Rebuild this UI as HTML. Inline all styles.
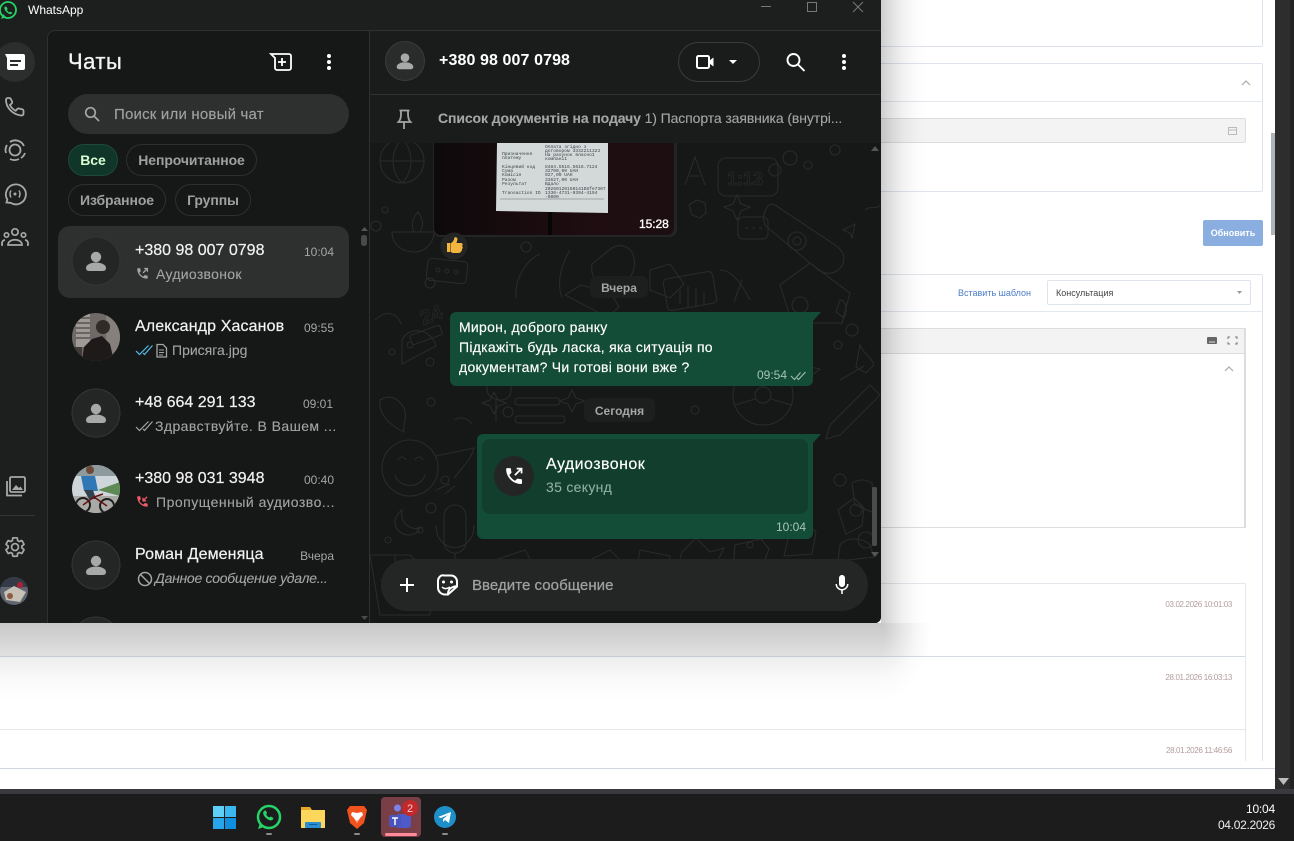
<!DOCTYPE html>
<html><head><meta charset="utf-8"><style>
html,body{margin:0;padding:0;width:1294px;height:841px;overflow:hidden;background:#fff;font-family:"Liberation Sans","DejaVu Sans",sans-serif}
.a{position:absolute;box-sizing:border-box}
.t{position:absolute;white-space:nowrap;line-height:20px;height:20px}
.r{text-align:right}
.g{color:#a5a5a5}
.w{color:#fff}
.n{font-size:16px;color:#f2f2f2;-webkit-text-stroke:.2px #f2f2f2}
.p{font-size:14px;color:#a5a5a5;-webkit-text-stroke:.1px #a5a5a5}
.tm{font-size:12px;color:#a5a5a5}
.m{font-size:14px;color:#fff;letter-spacing:.27px;-webkit-text-stroke:.15px #fff}
.chip{position:absolute;box-sizing:border-box;border:1px solid #2e3030;border-radius:17px;height:32px;line-height:30px;text-align:center;font-size:14px;font-weight:bold;color:#a0a0a0;letter-spacing:-.1px}
.card{position:absolute;box-sizing:border-box;background:#fff;border:1px solid #dfe4ec;border-radius:2px}
.s{position:absolute;left:0;top:0}
.d{font-size:8px;color:#b39c9c;letter-spacing:-.36px}
</style></head><body>
<div class="card" style="left:-5px;top:-5px;width:1268px;height:52px"></div>
<div class="card" style="left:-5px;top:63px;width:1268px;height:129px"></div>
<div class="a" style="left:0;top:101px;width:1262px;height:1px;background:#e3e7ee"></div>
<div class="a" style="left:0;top:118px;width:1246px;height:25px;background:#f3f3f3;border:1px solid #ddd;border-radius:2px"></div>
<div class="a" style="left:1203px;top:220px;width:60px;height:26px;background:#8aaee0;border-radius:2px;color:#fff;font-size:9px;font-weight:bold;text-align:center;line-height:26px">Обновить</div>
<div class="card" style="left:-5px;top:274px;width:1268px;height:500px;border-bottom:0"></div>
<div class="a" style="left:0;top:311px;width:1262px;height:1px;background:#e3e7ee"></div>
<div class="t" style="left:958px;top:283px;font-size:9px;color:#4a7cc7">Вставить шаблон</div>
<div class="a" style="left:1047px;top:280px;width:204px;height:25px;border:1px solid #dfe4ec;border-radius:2px;background:#fff"></div>
<div class="t" style="left:1056px;top:283px;font-size:9px;color:#444">Консультация</div>
<div class="a" style="left:-5px;top:328px;width:1251px;height:200px;border:1px solid #ddd;border-right:2px solid #ddd;background:#fff"></div>
<div class="a" style="left:0;top:329px;width:1244px;height:25px;background:#f3f3f3;border-bottom:1px solid #ddd"></div>
<div class="a" style="left:-5px;top:583px;width:1251px;height:200px;border:1px solid #e4e7ec;background:#fff"></div>
<div class="a" style="left:0;top:623px;width:1000px;height:33px;background:linear-gradient(90deg,#f1f1f1 880px,#fff 930px)"></div>
<div class="a" style="left:0;top:656px;width:1245px;height:1px;background:#d5dbe3"></div>
<div class="a" style="left:0;top:729px;width:1245px;height:1px;background:#e6e6e6"></div>
<div class="t r d" style="left:1132px;width:100px;top:595px">03.02.2026 10:01:03</div>
<div class="t r d" style="left:1132px;width:100px;top:668px">28.01.2026 16:03:13</div>
<div class="t r d" style="left:1132px;width:100px;top:741px">28.01.2026 11:46:56</div>
<div class="a" style="left:0;top:761px;width:1275px;height:28px;background:#fff"></div>
<div class="a" style="left:0;top:768px;width:1275px;height:1px;background:#cfd5dc"></div>
<div class="a" style="left:1271px;top:133px;width:4px;height:102px;background:#aeb5bb"></div>
<div class="a" style="left:1275px;top:0;width:15px;height:789px;background:#2d2d2d"></div>
<div class="a" style="left:1290px;top:0;width:4px;height:789px;background:#232323"></div>
<div class="a" style="left:0;top:789px;width:1294px;height:5px;background:#3a3a3e"></div>
<div class="a" style="left:0;top:794px;width:1294px;height:47px;background:#1c1c1c"></div>
<div class="a" style="left:381px;top:797px;width:40px;height:40px;background:#7a3e46;border-radius:4px"></div>
<div class="a" style="left:385px;top:833px;width:32px;height:3px;background:#ff8a9a;border-radius:2px"></div>
<div class="t r w" style="left:1175px;width:100px;top:799px;font-size:12px;letter-spacing:-.2px">10:04</div>
<div class="t r w" style="left:1175px;width:100px;top:815px;font-size:12px;letter-spacing:-.3px;color:#eee">04.02.2026</div>

<!-- explicit window shadow -->
<div class="a" style="left:881px;top:0;width:45px;height:623px;background:linear-gradient(90deg,rgba(0,0,0,.2),rgba(0,0,0,.12) 10px,rgba(0,0,0,.05) 22px,rgba(0,0,0,.01) 36px,rgba(0,0,0,0))"></div>
<div class="a" style="left:0;top:623px;width:881px;height:78px;background:linear-gradient(180deg,rgba(0,0,0,.17),rgba(0,0,0,.07) 33px,rgba(0,0,0,.02) 58px,rgba(0,0,0,0))"></div>
<div class="a" style="left:881px;top:623px;width:50px;height:78px;background:radial-gradient(50px 78px at 0 0,rgba(0,0,0,.18),rgba(0,0,0,.07) 42%,rgba(0,0,0,.02) 72%,rgba(0,0,0,0))"></div>

<!-- window -->
<div class="a" style="left:-40px;top:-40px;width:921px;height:663px;background:#1d1f1f;border-radius:0 0 6px 0">
 <div class="a" style="left:87px;top:70px;width:323px;height:593px;background:#161717;border-left:1px solid #2f3131;border-top:1px solid #2f3131;border-radius:8px 0 0 0"></div>
 <div class="a" style="left:409px;top:70px;width:1px;height:593px;background:#2f3131"></div>
 <div class="a" style="left:410px;top:70px;width:511px;height:65px;background:#1a1c1c;border-top:1px solid #303232;border-bottom:1px solid #303232"></div>
 <div class="a" style="left:410px;top:135px;width:511px;height:48px;background:#1a1c1c"></div>
 <div class="a" style="left:410px;top:183px;width:511px;height:480px;background:#161717;border-radius:0 0 6px 0"></div>
</div>

<!-- doodles -->
<svg class="s" width="881" height="623" viewBox="0 0 881 623" style="position:absolute;left:0;top:0">
<defs><clipPath id="cc"><path d="M370 143H881V617a6 6 0 0 1-6 6H370z"/></clipPath>
<clipPath id="im"><path d="M434 143H674V228a7 7 0 0 1-7 7H441a7 7 0 0 1-7-7z"/></clipPath>
<clipPath id="av1"><circle cx="96" cy="337" r="24"/></clipPath>
<clipPath id="av2"><circle cx="96" cy="489" r="24"/></clipPath>
<clipPath id="av3"><circle cx="14" cy="591" r="14"/></clipPath>
<clipPath id="lc"><rect x="47" y="30" width="322" height="593"/></clipPath>
<linearGradient id="ig" x1="0" x2="1" y1="0" y2="0"><stop offset="0" stop-color="#0d0a0b"/><stop offset=".3" stop-color="#170b0e"/><stop offset=".7" stop-color="#1f0d11"/><stop offset="1" stop-color="#1c0e11"/></linearGradient>
</defs>
<g clip-path="url(#cc)" fill="none" stroke="#292b2b" stroke-width="1.1">
<circle cx="402" cy="161" r="22"/><path d="M380 161h44M402 139c-12 12-12 32 0 44M402 139c12 12 12 32 0 44"/>
<path d="M392 232c0 12 10 20 22 20s20-10 20-20zM414 232c-4-8 0-16 4-20 5 6 6 14 2 20"/>
<circle cx="376" cy="226" r="5"/><circle cx="385" cy="210" r="3"/><circle cx="526" cy="247" r="5"/><circle cx="430" cy="283" r="5"/>
<rect x="427" y="260" width="40" height="22" rx="4" transform="rotate(6 447 271)"/><circle cx="438" cy="270" r="2"/><circle cx="447" cy="271" r="2"/><circle cx="456" cy="272" r="2"/>
<rect x="718" y="158" width="60" height="38" rx="8"/><text x="727" y="185" font-size="18" font-weight="bold" fill="none" stroke="#292b2b" stroke-width=".7">1:13</text>
<path d="M685 185l10-28 10 28M690 176h10"/>
<circle cx="775" cy="170" r="6"/><circle cx="790" cy="158" r="7"/><circle cx="808" cy="165" r="4"/><circle cx="835" cy="150" r="5"/>
<path d="M775 205l60 40c8 5 12 14 6 22s-16 8-24 2l-50-42c-8-7 0-28 8-22z"/><circle cx="797" cy="241" r="9"/><circle cx="797" cy="241" r="4"/>
<rect x="738" y="217" width="30" height="22" rx="5"/><path d="M745 228h3M752 228h3M759 228h3"/>
<path d="M737 195l4 9 9 3-9 4-4 9-4-9-9-4 9-3z M697 200l-8 5 3 10 8 3 6-5-1-10z"/>
<path d="M843 230l12-6-3 14-2-5zM865 210c6-5 12 0 15-5"/>
<path d="M612 248c10-6 20 0 22 10 3 14-8 30-22 30s-22-12-20-24z"/><path d="M650 270l20-6 14 20-14 14-20-8z"/>
<path d="M540 254c-14 6-26 26-24 44M570 250c-8 14-14 30-8 48"/><path d="M720 270c10 0 20 10 30 30M742 280l-8 22"/>
<path d="M780 285l30-22 40 30-8 30h-50z"/><circle cx="800" cy="305" r="8"/><path d="M565 295l16-10 30 8 8 14-12 10z"/><rect x="665" y="275" width="50" height="32" rx="4" transform="rotate(-10 690 291)"/>
<path d="M680 290v14M688 286v22M696 288v18M704 292v12"/>
<text x="420" y="322" font-size="20" font-weight="bold" fill="none" stroke="#292b2b" stroke-width=".7" transform="rotate(-20 430 315)">24</text>
<rect x="410" y="330" width="32" height="10" rx="2" transform="rotate(-20 426 335)"/>
<path d="M402 340c8-16 30-10 34 6l-34 18zM375 320c10-10 22-8 26 4"/>
<circle cx="392" cy="352" r="3"/><circle cx="430" cy="362" r="4"/><circle cx="410" cy="345" r="3"/>
<path d="M485 330c10-6 24-4 26 10v50c0 6-4 10-10 10s-14-4-14-10zM496 400v22"/>
<path d="M380 400c10-6 18-2 24 8 4 10-2 16 0 24-12-6-26-16-24-32z"/>
<path d="M494 392l4 8 8 3-8 3-4 8-4-8-8-3 8-3zM572 390l4 8 9 3-9 3-4 8-4-8-9-3 9-3z"/>
<rect x="515" y="398" width="45" height="7" rx="3"/><rect x="515" y="416" width="50" height="7" rx="3"/>
<circle cx="431" cy="402" r="4"/><circle cx="508" cy="412" r="5"/><circle cx="695" cy="410" r="4"/>
<circle cx="763" cy="395" r="30"/><circle cx="763" cy="395" r="8"/><path d="M763 365v22M735 405l20-6M791 405l-20-6"/>
<path d="M830 425l40-40 10 10-40 40-14 4z"/><path d="M806 357l4 10 10 2-8 6"/>
<path d="M700 365c10 10 30 14 40 20"/><circle cx="852" cy="330" r="6"/><circle cx="838" cy="345" r="4"/><path d="M860 345c4 10 10 10 14 20l-8 8-10-6z"/>
<circle cx="410" cy="468" r="28"/><path d="M398 460c2-4 6-4 8 0M415 460c2-4 6-4 8 0M395 475c4 14 26 14 30 0"/><path d="M436 456l38-8c-2 10-12 20-20 30"/><path d="M436 490l14-6M445 494l10-8"/>
<circle cx="388" cy="540" r="3"/><circle cx="431" cy="508" r="5"/><circle cx="420" cy="530" r="3"/><circle cx="445" cy="480" r="4"/>
<path d="M402 510c-8 6-10 16-2 22s18 2 20-4c-10 2-20-4-18-18z"/><rect x="444" y="505" width="22" height="48" rx="11"/><path d="M436 525c0 30 38 30 38 0M455 553v12"/>
<path d="M370 555h40l20 20v40h-50zM395 555v50M380 580h30"/>
<path d="M495 560l30-10 10 18-24 14zM540 590c10-12 30-14 44-6M555 598c6-6 16-8 24-4"/>
<path d="M590 560l20-10 18 18-16 20-22-8zM640 550l30 6-6 28-30-4zM682 552l14-14 14 14 14-4-8 16 8 14-14-4-14 14-4-14-14-8z"/>
<path d="M735 545l26-6 8 10-10 26-26-6zM790 530c8-8 20-6 26 2l-4 22-28 2z"/><path d="M838 510l16-12 10 10-2 18-16 8z"/>
<circle cx="840" cy="480" r="6"/><circle cx="856" cy="510" r="6"/><circle cx="750" cy="545" r="3"/>
<path d="M855 505l-3-22c6-4 14-4 20 0l2 30z"/><circle cx="866" cy="540" r="8"/><path d="M840 545c6-8 22-8 30 0l4 12-36 4z"/>
<path d="M840 300c6 0 8 10 4 18l-8-6zM840 380l24-14M486 460l-8 4M454 420c6-4 14-2 18 4M490 440c8-4 16 0 18 6"/>
</g>
<!-- image bubble -->
<path d="M433 143H677V230a7 7 0 0 1-7 7H440a7 7 0 0 1-7-7z" fill="#232525"/>
<g clip-path="url(#im)">
<rect x="434" y="143" width="240" height="92" fill="url(#ig)"/>
<path d="M550 212v23" stroke="#060606" stroke-width="4"/>
<path d="M497 143H608V213L496 211z" fill="#d3d8d8"/>
<g font-family="Liberation Mono,monospace" font-size="4.6" fill="#3f4348">
<text x="502" y="155">Призначення</text><text x="502" y="159">платежу</text><text x="545" y="148">Оплата згідно з</text><text x="545" y="152">договором 3332211323</text><text x="545" y="156">На рахунок власної</text><text x="545" y="160">компанії</text>
<text x="502" y="168">Кінцевий код</text><text x="545" y="168">8484.5516.5616.7124</text><text x="502" y="172">Сума</text><text x="545" y="172">32700,00 UAH</text><text x="502" y="176">Комісія</text><text x="545" y="176">927,00 UAH</text><text x="502" y="181">Разом</text><text x="545" y="181">33627,00 UAH</text><text x="502" y="185">Результат</text><text x="545" y="185">Вдало</text><text x="545" y="190">20260120150141D8fe7307</text><text x="502" y="194">Transaction ID</text><text x="545" y="194">1330-4731-9394-4194</text><text x="545" y="198">-0800</text>
</g>
<path d="M500 199H604" stroke="#8a9094" stroke-width=".7"/>
</g>
<circle cx="454" cy="246" r="13.500" fill="#232525"/>
<path d="M447 243h3.500v9H447zM451 243c2-1 3-3 3.500-5.500 1-1 3 0 3 2l-1 3.500h4.500c2 0 2 2 1 3 1 1 1 2 0 3 0 1 0 2-1 2.500-.7 1.500-2 1.500-3 1.500h-5.500l-1.500-1z" fill="#f4b53f"/>
<!-- bubbles -->
<path d="M456 312H821L813 321V380a6 6 0 0 1-6 6H456a6 6 0 0 1-6-6V318a6 6 0 0 1 6-6z" fill="#144d37"/>
<path d="M483 434H821L813 443V533a6 6 0 0 1-6 6H483a6 6 0 0 1-6-6V440a6 6 0 0 1 6-6z" fill="#144d37"/>
<rect x="482" y="439" width="326" height="75" rx="8" fill="#123e2d"/>
<rect x="590" y="276" width="58" height="22" rx="6" fill="#1d1f1f"/>
<rect x="584" y="398" width="71" height="24" rx="6" fill="#1d1f1f"/>
<circle cx="514" cy="476" r="20" fill="#242626"/>
<rect x="381" y="559" width="487" height="52" rx="26" fill="#242626"/>
<!-- chat scrollbar -->
<rect x="872" y="487" width="5" height="59" rx="2" fill="#4a4c4c"/>
<path d="M871 151l4-5 4 5zM871 552l4 5 4-5z" fill="#555"/>
<!-- list row active -->
<rect x="58" y="226" width="291" height="72" rx="12" fill="#2e2f2f"/>
<rect x="68" y="94" width="281" height="40" rx="20" fill="#2e2f2f"/>
<circle cx="15" cy="62" r="20" fill="#2c2e2e"/>
<!-- avatars -->
<g stroke="#343636" fill="#242626"><circle cx="96" cy="261" r="24"/><circle cx="96" cy="413" r="24"/><circle cx="96" cy="565" r="24"/><circle cx="96" cy="641" r="24" clip-path="url(#lc)"/></g>
<g fill="#a8a8a8"><g transform="translate(96 261)"><circle cy="-4" r="5.200"/><path d="M-6.500 10h13q3.500 0 3.500-3c0-3.500-5-5.500-10-5.500s-10 2-10 5.500q0 3 3.500 3z"/></g>
<g transform="translate(96 413)"><circle cy="-4" r="5.200"/><path d="M-6.500 10h13q3.500 0 3.500-3c0-3.500-5-5.500-10-5.500s-10 2-10 5.500q0 3 3.500 3z"/></g>
<g transform="translate(96 565)"><circle cy="-4" r="5.200"/><path d="M-6.500 10h13q3.500 0 3.500-3c0-3.500-5-5.500-10-5.500s-10 2-10 5.500q0 3 3.500 3z"/></g></g>
<circle cx="405" cy="61" r="19.500" fill="#2a2c2c" stroke="#3a3c3c"/>
<g fill="#a8a8a8" transform="translate(405 61) scale(.83)"><circle cy="-4" r="5.200"/><path d="M-6.500 10h13q3.500 0 3.500-3c0-3.500-5-5.500-10-5.500s-10 2-10 5.500q0 3 3.500 3z"/></g>
<g clip-path="url(#av1)"><rect x="72" y="313" width="48" height="48" fill="#6f6967"/><rect x="76" y="313" width="14" height="34" fill="#a09a96"/><path d="M76 318h14M76 323h14M76 328h14M76 333h14M76 338h14" stroke="#4a4543" stroke-width="1.300"/><rect x="106" y="313" width="14" height="48" fill="#86807c"/><path d="M82 361l2-14 8-8 10-3 8 8 4 17z" fill="#1d1a19"/><circle cx="103" cy="327" r="7" fill="#302b29"/><path d="M72 347h10v14H72z" fill="#3f3a38"/></g>
<g clip-path="url(#av2)"><rect x="72" y="465" width="48" height="48" fill="#cfd6da"/><rect x="72" y="465" width="48" height="11" fill="#8f9a9f"/><path d="M98 490l22-8v14z" fill="#5e8a54"/><path d="M72 496h48v17H72z" fill="#a9a9a6"/><circle cx="90" cy="470" r="4" fill="#6b4b38"/><path d="M81 476h14l3 15H84z" fill="#2f78b5"/><path d="M84 490h9l3 9h-7z" fill="#31414e"/><circle cx="83" cy="505" r="7" fill="none" stroke="#1c1c1c" stroke-width="2"/><circle cx="107" cy="506" r="7" fill="none" stroke="#1c1c1c" stroke-width="2"/><path d="M83 505l11-8 13 9M94 497l9-3" stroke="#611" stroke-width="1.500" fill="none"/></g>
<g clip-path="url(#av3)"><rect y="577" width="28" height="28" fill="#5f6672"/><rect y="577" width="28" height="10" fill="#343a46"/><path d="M4 592l10-6 12 6-6 10-14-2z" fill="#c7c0b4"/><circle cx="10" cy="596" r="3" fill="#8d5a44"/><circle cx="20" cy="585" r="3" fill="#a23"/></g>
<!-- list scroll -->
<path d="M361 231l3.500-4 3.500 4z" fill="#555"/><rect x="361" y="235" width="6" height="11" rx="2.500" fill="#484a4a"/><path d="M361 616l3.500 4 3.500-4z" fill="#4a4a4a"/>
<!-- video pill -->
<rect x="678.500" y="42.500" width="81" height="39" rx="19.500" fill="none" stroke="#3a3c3c"/>
</svg>

<!-- window text -->
<div class="t w" style="left:28px;top:0;font-size:12px">WhatsApp</div>
<div class="t" style="left:68px;top:52px;font-size:22px;color:#f5f5f5;letter-spacing:.5px;-webkit-text-stroke:.3px #f5f5f5">Чаты</div>
<div class="t g" style="left:114px;top:105px;font-size:15px;color:#a0a0a0;letter-spacing:.2px;-webkit-text-stroke:.15px #a0a0a0">Поиск или новый чат</div>
<div class="chip" style="left:68px;top:144px;width:50px;background:#103529;border-color:#1d4a3a;color:#d9fdd3">Все</div>
<div class="chip" style="left:126px;top:144px;width:131px">Непрочитанное</div>
<div class="chip" style="left:68px;top:184px;width:98px">Избранное</div>
<div class="chip" style="left:175px;top:184px;width:76px">Группы</div>

<div class="t n" style="left:135px;top:241px">+380 98 007 0798</div><div class="t tm r" style="left:284px;width:50px;top:242px">10:04</div><div class="t p" style="left:156px;top:264px;letter-spacing:.3px">Аудиозвонок</div>
<div class="t n" style="left:135px;top:317px;letter-spacing:.12px">Александр Хасанов</div><div class="t tm r" style="left:284px;width:50px;top:318px">09:55</div><div class="t p" style="left:172px;top:340px">Присяга.jpg</div>
<div class="t n" style="left:135px;top:393px">+48 664 291 133</div><div class="t tm r" style="left:283px;width:50px;top:394px">09:01</div><div class="t p" style="left:155px;top:416px;letter-spacing:.42px">Здравствуйте. В Вашем ...</div>
<div class="t n" style="left:135px;top:469px">+380 98 031 3948</div><div class="t tm r" style="left:284px;width:50px;top:470px">00:40</div><div class="t p" style="left:156px;top:492px;letter-spacing:.5px">Пропущенный аудиозво...</div>
<div class="t n" style="left:135px;top:545px;letter-spacing:.1px">Роман Деменяца</div><div class="t tm r" style="left:284px;width:50px;top:546px">Вчера</div><div class="t p" style="left:155px;top:568px;font-style:italic;letter-spacing:-.28px">Данное сообщение удале...</div>

<div class="t w" style="left:439px;top:51px;font-size:16px;font-weight:bold;letter-spacing:.1px">+380 98 007 0798</div>
<div class="t p" style="left:438px;top:108px;color:#a5a5a5;letter-spacing:-.1px"><b>Список документів на подачу</b> 1) Паспорта заявника (внутрі...</div>
<div class="t w" style="left:639px;top:214px;font-size:12px;-webkit-text-stroke:.35px #fff;letter-spacing:-.05px">15:28</div>
<div class="t" style="left:590px;width:58px;text-align:center;top:278px;font-size:12px;font-weight:bold;color:#a5a5a5">Вчера</div>
<div class="t" style="left:584px;width:71px;text-align:center;top:401px;font-size:12px;font-weight:bold;color:#a5a5a5">Сегодня</div>
<div class="t m" style="left:459px;top:317px">Мирон, доброго ранку</div>
<div class="t m" style="left:459px;top:337px">Підкажіть будь ласка, яка ситуація по</div>
<div class="t m" style="left:459px;top:357px">документам? Чи готові вони вже ?</div>
<div class="t" style="left:757px;top:365px;font-size:12px;color:#a5c4b7">09:54</div>
<div class="t w" style="left:546px;top:455px;font-size:16px;letter-spacing:.45px;-webkit-text-stroke:.15px #fff">Аудиозвонок</div>
<div class="t" style="left:546px;top:477px;font-size:14px;color:#8fb0a3;letter-spacing:.3px;-webkit-text-stroke:.1px #8fb0a3">35 секунд</div>
<div class="t r" style="left:756px;width:50px;top:517px;font-size:12px;color:#a5c4b7">10:04</div>
<div class="t" style="left:472px;top:576px;font-size:15px;color:#a0a0a0;letter-spacing:.05px;-webkit-text-stroke:.25px #a0a0a0">Введите сообщение</div>

<!-- icons -->
<svg class="s" width="1294" height="841" viewBox="0 0 1294 841" style="position:absolute;left:0;top:0">
<!-- title -->
<circle cx="8" cy="10" r="8" fill="none" stroke="#25d366" stroke-width="1.800"/><path d="M1 19l2-5 3 3z" fill="#25d366"/>
<path d="M5 6.500c-1 1-.8 3 1 5s4 3.200 5.500 2.500l.8-1.200-2-1.200-1 .8c-1-.4-2-1.400-2.400-2.400l.8-1-1.200-2.200z" fill="#25d366"/>
<path d="M761 6.500h10" stroke="#777" stroke-width="1"/><rect x="807.500" y="2.500" width="9" height="9" fill="none" stroke="#777"/><path d="M853 2l10 10M863 2l-10 10" stroke="#777"/>
<!-- rail -->
<path d="M5 54h18a2 2 0 0 1 2 2v12a2 2 0 0 1-2 2H9a2 2 0 0 1-2-2V58z" fill="#fff"/><path d="M10 60h11v2H10zM10 64h8v2h-8z" fill="#2c2e2e"/>
<path d="M8 98c-1.500 0-2 1-2 2 0 8 7 14.500 15 15.500 1.500 0 2.500-.5 2.500-2v-2.500c0-1-.5-1.500-1.500-1.800l-3-.7c-.8-.2-1.300 0-1.800.5l-1.500 1.800c-2.500-1.300-4.500-3.300-5.800-5.800l1.800-1.500c.5-.5.700-1 .5-1.800L11 99.500C10.800 98.500 10 98 9 98z" fill="none" stroke="#a8a8a8" stroke-width="1.800"/>
<g fill="none" stroke="#a8a8a8" stroke-width="1.800"><circle cx="15" cy="150" r="5.500"/><path d="M6 153a9.500 9.500 0 0 1 1-8M10 142a9.500 9.500 0 0 1 14 4M25 153a10 10 0 0 1-4 5M19 159a10 10 0 0 1-9 0"/>
<path d="M6.500 202.500l.8-3a10 10 0 1 1 3.200 3.300z"/></g>
<circle cx="15" cy="194" r="1.500" fill="#a8a8a8"/>
<path d="M11 190.500c-1.300 2-1.300 5 0 7M19 190.500c1.300 2 1.300 5 0 7" fill="none" stroke="#a8a8a8" stroke-width="1.500"/>
<g fill="none" stroke="#a8a8a8" stroke-width="1.700"><circle cx="15" cy="232" r="3.200"/><circle cx="6.500" cy="235" r="2.200"/><circle cx="23.500" cy="235" r="2.200"/><path d="M8 245c0-7 14-7 14 0zM3 245h-1c-.5-3 1-5 3-5M27 245h1c.5-3-1-5-3-5"/></g>
<g fill="none" stroke="#a8a8a8" stroke-width="1.800"><rect x="10" y="477" width="15" height="15" rx="1.500"/><path d="M7 481v14.500h15"/></g><path d="M12 490l4-5 3 3 1.500-1.500L23 490z" fill="#a8a8a8"/>
<path d="M0 515.500h35" stroke="#333536"/>
<g transform="translate(3.500 535.500) scale(.96)"><path fill="none" stroke="#a8a8a8" stroke-width="1.800" d="M19.140 12.940c.04-.3.06-.61.06-.94 0-.32-.02-.64-.07-.94l2.030-1.580c.18-.14.23-.41.12-.61l-1.920-3.320c-.12-.22-.37-.29-.59-.22l-2.390.96c-.5-.38-1.030-.7-1.620-.94l-.36-2.540c-.04-.24-.24-.41-.48-.41h-3.840c-.24 0-.43.17-.47.41l-.36 2.540c-.59.24-1.130.57-1.620.94l-2.390-.96c-.22-.08-.47 0-.59.22L2.740 8.870c-.12.21-.08.47.12.61l2.030 1.580c-.05.3-.09.63-.09.94s.02.64.07.94l-2.030 1.580c-.18.14-.23.41-.12.61l1.920 3.320c.12.22.37.29.59.22l2.390-.96c.5.38 1.030.7 1.620.94l.36 2.540c.05.24.24.41.48.41h3.840c.24 0 .44-.17.47-.41l.36-2.540c.59-.24 1.130-.56 1.620-.94l2.390.96c.22.08.47 0 .59-.22l1.920-3.320c.12-.22.07-.47-.12-.61l-2.010-1.580zM12 15.600c-1.980 0-3.600-1.620-3.600-3.600s1.620-3.600 3.600-3.600 3.600 1.620 3.600 3.600-1.620 3.600-3.600 3.600z"/></g>
<!-- list header -->
<path d="M271 54h18a2 2 0 0 1 2 2v12a2 2 0 0 1-2 2h-12a2 2 0 0 1-2-2V58z" fill="none" stroke="#fff" stroke-width="1.800"/><path d="M282 58v8M278 62h8" stroke="#fff" stroke-width="1.800"/>
<g fill="#fff"><circle cx="329" cy="56" r="2"/><circle cx="329" cy="62" r="2"/><circle cx="329" cy="68" r="2"/><circle cx="844" cy="56" r="2"/><circle cx="844" cy="62" r="2"/><circle cx="844" cy="68" r="2"/></g>
<g fill="none" stroke="#a5a5a5" stroke-width="1.700"><circle cx="90.500" cy="112.500" r="4.800"/><path d="M94 116l5 5"/></g>
<g fill="none" stroke="#fff" stroke-width="1.900"><circle cx="793.500" cy="60" r="6"/><path d="M798 64.500l6.500 6.500"/></g>
<!-- preview icons -->
<g transform="translate(135.500 266.500) scale(.58)"><path fill="#a5a5a5" d="M20 15.500c-1.250 0-2.450-.2-3.570-.57-.35-.11-.74-.03-1.020.24l-2.200 2.200c-2.830-1.440-5.150-3.750-6.590-6.590l2.200-2.210c.28-.26.36-.65.25-1C8.700 6.450 8.500 5.250 8.500 4c0-.55-.45-1-1-1H4c-.55 0-1 .45-1 1 0 9.390 7.610 17 17 17 .55 0 1-.45 1-1v-3.500c0-.55-.45-1-1-1z"/><path d="M13 11l7-7M15 3.500h5.500V9" fill="none" stroke="#a5a5a5" stroke-width="2.200"/></g>
<g fill="none" stroke="#53bdeb" stroke-width="1.200"><path d="M136 351l3.500 3.500 9-9M143 353l1.500 1.500 8-9"/></g>
<g fill="none" stroke="#a5a5a5" stroke-width="1.300"><path d="M157 344.500h6l3.500 3.500v9h-9.500z"/><path d="M159 350h5M159 352.500h5M159 355h4" stroke-width="1"/></g>
<g fill="none" stroke="#a5a5a5" stroke-width="1.200"><path d="M136 427l3.500 3.500 9-9M143 429l1.500 1.500 8-9"/></g>
<g transform="translate(135.500 494.500) scale(.58)"><path fill="#f15c6d" d="M20 15.500c-1.250 0-2.450-.2-3.570-.57-.35-.11-.74-.03-1.020.24l-2.200 2.200c-2.830-1.440-5.150-3.750-6.590-6.590l2.200-2.210c.28-.26.36-.65.25-1C8.700 6.450 8.500 5.250 8.500 4c0-.55-.45-1-1-1H4c-.55 0-1 .45-1 1 0 9.390 7.610 17 17 17 .55 0 1-.45 1-1v-3.500c0-.55-.45-1-1-1z"/><path d="M20 4l-7 7M13 5.500V11h5.500" fill="none" stroke="#f15c6d" stroke-width="2.200"/></g>
<circle cx="145" cy="579" r="6.500" fill="none" stroke="#a5a5a5" stroke-width="1.500"/><path d="M140.500 574.500l9 9" stroke="#a5a5a5" stroke-width="1.500"/>
<!-- header right -->
<rect x="697" y="56" width="12" height="12" rx="1.500" fill="none" stroke="#fff" stroke-width="2"/><path d="M709.500 60.500l4-3v9l-4-3z" fill="#fff"/>
<path d="M729 60h8l-4 4z" fill="#fff"/>
<!-- pin -->
<path d="M399.500 110.500h10M401 111v3c0 2-.5 6-2.500 8h12c-2-2-2.500-6-2.500-8v-3M404 122v7" fill="none" stroke="#a5a5a5" stroke-width="1.800"/>
<!-- ticks msg -->
<g fill="none" stroke="#a5c4b7" stroke-width="1"><path d="M791 376l3.500 3.500 6-7M797 378l1.500 1.500 7-7.500"/></g>
<!-- call -->
<g transform="translate(503.500 465.500) scale(.88)"><path fill="#fff" d="M20 15.500c-1.250 0-2.450-.2-3.570-.57-.35-.11-.74-.03-1.020.24l-2.200 2.200c-2.830-1.440-5.150-3.750-6.590-6.590l2.200-2.210c.28-.26.36-.65.25-1C8.700 6.450 8.500 5.250 8.500 4c0-.55-.45-1-1-1H4c-.55 0-1 .45-1 1 0 9.390 7.610 17 17 17 .55 0 1-.45 1-1v-3.500c0-.55-.45-1-1-1z"/><path d="M13 11l7-7M15 3.500h5.500V9" fill="none" stroke="#fff" stroke-width="2"/></g>
<!-- input -->
<path d="M407 578v14M400 585h14" stroke="#fff" stroke-width="2"/>
<path d="M440 576.500a4 4 0 0 1 4-1h7a6 6 0 0 1 6 6v5l-9 8h-3a7 7 0 0 1-7-7v-7a6 6 0 0 1 2-4z" fill="none" stroke="#fff" stroke-width="2"/><path d="M448 594c0-5 3-7 9-8" fill="none" stroke="#fff" stroke-width="2"/><circle cx="443.500" cy="582" r="1.500" fill="#fff"/><circle cx="451.500" cy="582" r="1.500" fill="#fff"/><path d="M442 587c2 2 5 2 8 0" fill="none" stroke="#fff" stroke-width="1.500"/>
<g transform="translate(830 573)"><path fill="#fff" d="M12 14c1.660 0 3-1.340 3-3V5c0-1.660-1.340-3-3-3S9 3.340 9 5v6c0 1.660 1.340 3 3 3z M17 11c0 2.760-2.240 5-5 5s-5-2.240-5-5H5.500c0 3.400 2.600 6.100 5.750 6.500V21h1.500v-3.500c3.150-.4 5.750-3.100 5.750-6.500H17z"/></g>
<!-- page icons -->
<path d="M1242 85l4-4 4 4" fill="none" stroke="#aaa" stroke-width="1.200"/><path d="M1225 371l4-4 4 4" fill="none" stroke="#aaa" stroke-width="1.200"/>
<rect x="1228.500" y="127.500" width="8" height="7" fill="none" stroke="#bbb"/><path d="M1228 130h9" stroke="#bbb"/>
<path d="M1237 291h5l-2.500 3z" fill="#999"/>
<rect x="1207" y="337" width="10" height="7" rx="1" fill="#666"/><path d="M1209 342h6" stroke="#ddd"/>
<path d="M1228 339v-2h2M1235 337h2v2M1237 342v2h-2M1230 344h-2v-2" fill="none" stroke="#777"/>
<path d="M1278 778h11l-5.500 7z" fill="#bdbdbd"/>
<!-- taskbar -->
<g><rect x="213" y="806" width="11" height="11" fill="#5ed0f7"/><rect x="225" y="806" width="11" height="11" fill="#3bb8f2"/><rect x="213" y="818" width="11" height="11" fill="#28a4ea"/><rect x="225" y="818" width="11" height="11" fill="#0f8fe0"/></g>
<circle cx="269" cy="817" r="11" fill="none" stroke="#25d366" stroke-width="2.500"/><path d="M258 829l2-6 4 4z" fill="#25d366"/><path d="M264 811c-1.500 1.500-1 4 1.500 6.500s5 3.500 7 2.500l1-2-3-1.500-1.200 1c-1.300-.5-2.600-1.800-3.200-3.200l1-1.300-1.600-2.800z" fill="#25d366"/>
<path d="M301 807h9l2 3h13v18h-24z" fill="#e8a825"/><path d="M301 810h24v18h-24z" fill="#fbd75b"/><rect x="305" y="822" width="16" height="6" rx="1" fill="#2a8fd0"/><path d="M309 824.500h8" stroke="#0e5a9c"/>
<path d="M350 806h14l3 4-3 13-7 6-7-6-3-13z" fill="#f1521e"/><path d="M352 812l5 1 5-1 1 3-3 3-3 5-3-5-3-3z" fill="#fff"/><path d="M355 820l2 1 2-1-2 2z" fill="#f1521e"/>
<circle cx="397.500" cy="808" r="3.500" fill="#7b83eb"/><rect x="396" y="814" width="15" height="14" rx="3" fill="#5059c9"/><rect x="389" y="815" width="12" height="12" rx="2" fill="#4b53bc"/><path d="M392 818h6M395 818v7" stroke="#fff" stroke-width="1.500"/>
<circle cx="410" cy="808" r="8" fill="#c4282b"/>
<circle cx="445" cy="817" r="11" fill="#1f8fc9"/><path d="M438 817l13-5-2 11-4-3-2 2v-3l5-4-7 3z" fill="#fff"/>
<g fill="#8a8a8a"><rect x="266" y="833" width="6" height="2" rx="1"/><rect x="354" y="833" width="6" height="2" rx="1"/><rect x="442" y="833" width="6" height="2" rx="1"/></g>
<text x="410" y="812" font-size="11" fill="#f3d0d0" text-anchor="middle" font-family="Liberation Sans,sans-serif">2</text>
</svg>
</body></html>
